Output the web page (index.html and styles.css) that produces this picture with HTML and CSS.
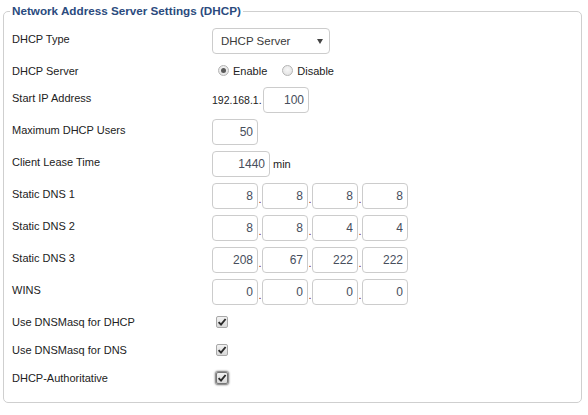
FILE: index.html
```html
<!DOCTYPE html>
<html>
<head>
<meta charset="utf-8">
<link rel="stylesheet" href="styles.css">
</head>
<body>
<fieldset class="panel">
  <legend class="panel-title">Network Address Server Settings (DHCP)</legend>
  <div class="rows">
    <div class="row">
      <span class="label">DHCP Type</span>
      <div class="field">
        <div class="select"><span>DHCP Server</span><svg class="arrow" width="6" height="5" viewBox="0 0 6 5"><path d="M0 0H6L3 5Z" fill="#444"/></svg></div>
      </div>
    </div>
    <div class="row short">
      <span class="label">DHCP Server</span>
      <div class="field">
        <span class="radio checked"></span><span class="opt">Enable</span>
        <span class="radio second"></span><span class="opt">Disable</span>
      </div>
    </div>
    <div class="row">
      <span class="label">Start IP Address</span>
      <div class="field"><span class="prefix">192.168.1.</span><input class="num" type="text" value="100"></div>
    </div>
    <div class="row">
      <span class="label">Maximum DHCP Users</span>
      <div class="field"><input class="num" type="text" value="50"></div>
    </div>
    <div class="row">
      <span class="label">Client Lease Time</span>
      <div class="field"><input class="num wide" type="text" value="1440"><span class="unit">min</span></div>
    </div>
    <div class="row">
      <span class="label">Static DNS 1</span>
      <div class="field ip"><input class="num" type="text" value="8"><span class="sep">.</span><input class="num" type="text" value="8"><span class="sep">.</span><input class="num" type="text" value="8"><span class="sep">.</span><input class="num" type="text" value="8"></div>
    </div>
    <div class="row">
      <span class="label">Static DNS 2</span>
      <div class="field ip"><input class="num" type="text" value="8"><span class="sep">.</span><input class="num" type="text" value="8"><span class="sep">.</span><input class="num" type="text" value="4"><span class="sep">.</span><input class="num" type="text" value="4"></div>
    </div>
    <div class="row">
      <span class="label">Static DNS 3</span>
      <div class="field ip"><input class="num" type="text" value="208"><span class="sep">.</span><input class="num" type="text" value="67"><span class="sep">.</span><input class="num" type="text" value="222"><span class="sep">.</span><input class="num" type="text" value="222"></div>
    </div>
    <div class="row">
      <span class="label">WINS</span>
      <div class="field ip"><input class="num" type="text" value="0"><span class="sep">.</span><input class="num" type="text" value="0"><span class="sep">.</span><input class="num" type="text" value="0"><span class="sep">.</span><input class="num" type="text" value="0"></div>
    </div>
    <div class="row check-row">
      <span class="label">Use DNSMasq for DHCP</span>
      <div class="field"><span class="check"><svg width="10" height="10" viewBox="0 0 10 10"><path d="M1.6 5.2L4 7.6L8.6 2" fill="none" stroke="#2a2a2a" stroke-width="1.9"/></svg></span></div>
    </div>
    <div class="row check-row">
      <span class="label">Use DNSMasq for DNS</span>
      <div class="field"><span class="check"><svg width="10" height="10" viewBox="0 0 10 10"><path d="M1.6 5.2L4 7.6L8.6 2" fill="none" stroke="#2a2a2a" stroke-width="1.9"/></svg></span></div>
    </div>
    <div class="row check-row">
      <span class="label">DHCP-Authoritative</span>
      <div class="field"><span class="check focused"><svg width="10" height="10" viewBox="0 0 10 10"><path d="M1.6 5.2L4 7.6L8.6 2" fill="none" stroke="#2a2a2a" stroke-width="1.9"/></svg></span></div>
    </div>
  </div>
</fieldset>
</body>
</html>
```
FILE: styles.css
```css
html, body {
  margin: 0;
  padding: 0;
  background: #ffffff;
}

body {
  font-family: "Liberation Sans", Arial, sans-serif;
  font-size: 11px;
  color: #222222;
}

.panel {
  margin: 3px 6px 0 3px;
  padding: 9px 8px 13px 8px;
  border: 1px solid #cfcfcf;
  border-radius: 5px;
  min-width: 0;
}

.panel-title {
  margin-left: -2px;
  padding: 0 2px;
  font-size: 11.7px;
  line-height: 16px;
  font-weight: bold;
  color: #2b4b7e;
}

.rows {
  display: flex;
  flex-direction: column;
  gap: 6px;
}

.row {
  display: grid;
  grid-template-columns: 200px auto;
  align-items: center;
  height: 26px;
}

.row.short {
  height: 21px;
}

.row.check-row {
  height: 22px;
}

.label {
  line-height: 14px;
  margin-bottom: 4px;
}

.row.short .label,
.row.check-row .label {
  margin-bottom: 0;
}

.field {
  display: flex;
  align-items: center;
  height: 100%;
}

.select {
  box-sizing: border-box;
  width: 118px;
  height: 26px;
  border: 1px solid #cccccc;
  border-radius: 4px;
  display: flex;
  align-items: center;
  justify-content: space-between;
  padding: 0 6px 0 8px;
  font-size: 11.5px;
  color: #3a3a3a;
}

.arrow {
  display: block;
}

.radio {
  box-sizing: border-box;
  width: 11px;
  height: 11px;
  border-radius: 50%;
  border: 1px solid #b4b4b4;
  background: radial-gradient(circle at 50% 40%, #f7f7f7 0%, #dedede 100%);
  margin-left: 6px;
  margin-right: 4px;
  position: relative;
}

.radio.second {
  margin-left: 15px;
  margin-right: 4px;
}

.radio.checked::after {
  content: "";
  position: absolute;
  left: 2px;
  top: 2px;
  width: 5px;
  height: 5px;
  border-radius: 50%;
  background: #5a5a5a;
}

.opt {
  line-height: 14px;
}

.prefix {
  font-size: 10.5px;
  margin-right: 1px;
  width: 50px;
}

.num {
  box-sizing: border-box;
  width: 46px;
  height: 26px;
  margin: 0;
  border: 1px solid #cccccc;
  border-radius: 4px;
  padding: 0 4px 0 2px;
  text-align: right;
  font-family: "Liberation Sans", Arial, sans-serif;
  font-size: 12px;
  color: #474e5c;
  background: #fff;
  outline: none;
}

.num.wide {
  width: 58px;
}

.unit {
  margin-left: 3px;
}

.sep {
  width: 4px;
  align-self: flex-end;
  margin-bottom: 4px;
  font-size: 11px;
  line-height: 11px;
  text-align: center;
  color: #7a1a1a;
}

.check {
  box-sizing: border-box;
  width: 12px;
  height: 12px;
  margin-left: 4px;
  border: 1px solid #a8a8a8;
  border-radius: 2px;
  background: linear-gradient(#f2f2f2, #d9d9d9);
  display: flex;
  align-items: center;
  justify-content: center;
}

.check.focused {
  box-shadow: 0 0 2px 1px #6a6a6a;
  border-color: #777;
}

.check svg {
  display: block;
}
```
